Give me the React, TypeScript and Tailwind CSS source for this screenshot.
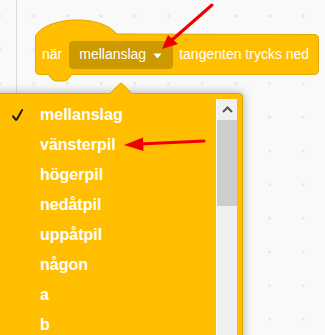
const keys = ['mellanslag', 'vänsterpil', 'högerpil', 'nedåtpil', 'uppåtpil', 'någon', 'a', 'b']

function Dots() {
  return (
    <svg className="absolute inset-0" width="325" height="335">
      <defs>
        <pattern id="grid" x="0" y="16" width="33.7" height="33.7" patternUnits="userSpaceOnUse">
          <path d="M-1.5 0h3M0 -1.5v3" stroke="#dedede" strokeWidth="1" />
          <path d="M32.2 0h3M33.7 -1.5v3M32.2 33.7h3M33.7 32.2v3M-1.5 33.7h3M0 32.2v3" stroke="#dedede" strokeWidth="1" />
        </pattern>
      </defs>
      <rect width="325" height="335" fill="url(#grid)" />
    </svg>
  )
}

function HatShape() {
  // hat block outline with the notch underneath
  return (
    <svg className="absolute inset-0" width="325" height="335">
      <path
        d="M35.5 36 C 45 17, 100 13, 117 34 L314 34.5 Q318.5 34.5 318.5 38.5 L318.5 70 Q318.5 74.5 314 74.5 L72 74.5 L67 80 Q66 81 64 81 L56 81 Q54 81 53 80 L48 74.5 L39.5 74.5 Q35.5 74.5 35.5 70.5 Z"
        fill="#FFBF00"
        stroke="#E0A800"
        strokeWidth="1"
      />
    </svg>
  )
}

function Arrows() {
  return (
    <svg className="absolute inset-0 pointer-events-none" width="325" height="335">
      <line x1="212" y1="5" x2="172" y2="40" stroke="#ee0000" strokeWidth="3" strokeLinecap="round" />
      <polygon points="162,49 168,35 178,44" fill="#ee0000" />
      <line x1="204" y1="141" x2="140" y2="144" stroke="#ee0000" strokeWidth="3" strokeLinecap="round" />
      <polygon points="124,145 143,137.5 143.5,151" fill="#ee0000" />
    </svg>
  )
}

export default function App() {
  return (
    <div className="relative h-[335px] w-[325px] overflow-hidden bg-[#f9f9f9] font-['Liberation_Sans',Arial,sans-serif]">
      <Dots />
      <div className="absolute left-[16px] top-0 h-[95px] w-px bg-[#dcdcdc]" />

      <HatShape />
      <div className="absolute left-[35px] top-[34px] flex h-[41px] items-center pl-[7px] text-[14px] text-white">
        <span>när</span>
        <div className="ml-[7px] flex h-[28px] items-center rounded-[4px] bg-[#CC9900] pl-[10px] pr-[11px]">
          <span>mellanslag</span>
          <svg className="ml-[7px] mt-[3px]" width="9" height="6" viewBox="0 0 9 6">
            <path d="M0.5 0.5 H8.5 L5 5 Q4.5 5.6 4 5 Z" fill="#fff" />
          </svg>
        </div>
        <span className="ml-[6px]">tangenten trycks ned</span>
      </div>

      {/* dropdown menu */}
      <div className="absolute left-[-5px] top-[93px] flex h-[260px] w-[248px] rounded-[4px] border border-[#d9a300] bg-[#FFBF00] shadow-[0_0_8px_1px_rgba(0,0,0,0.25)]">
        <div className="absolute left-[117px] top-[-9.5px] h-[16px] w-[16px] rotate-45 rounded-tl-[3px] border-l border-t border-[#d9a300] bg-[#FFBF00]" />
        <ul className="relative flex-1 pt-[6px]">
          {keys.map((k, i) => (
            <li key={k} className="flex h-[30px] items-center text-[16px] font-bold text-white">
              <span className="flex w-[44px] pl-[16px]">
                {i === 0 && (
                  <svg width="11" height="12" viewBox="0 0 11 12">
                    <path d="M1 7.2 L3.6 10.6 Q4.2 11.2 4.8 10.4 L10.2 1" fill="none" stroke="#1a1a1a" strokeWidth="2" strokeLinecap="round" strokeLinejoin="round" />
                  </svg>
                )}
              </span>
              <span>{k}</span>
            </li>
          ))}
        </ul>
        <div className="relative mr-[5px] mt-[5px] flex w-[21px] flex-col border-l border-white bg-[#f0f0f0]">
          <div className="flex h-[21px] items-center justify-center">
            <svg width="11" height="7" viewBox="0 0 11 7">
              <polyline points="1,6 5.5,1.5 10,6" fill="none" stroke="#555" strokeWidth="2" />
            </svg>
          </div>
          <div className="h-[86px] bg-[#cdcdcd]" />
        </div>
      </div>

      <Arrows />
    </div>
  )
}
